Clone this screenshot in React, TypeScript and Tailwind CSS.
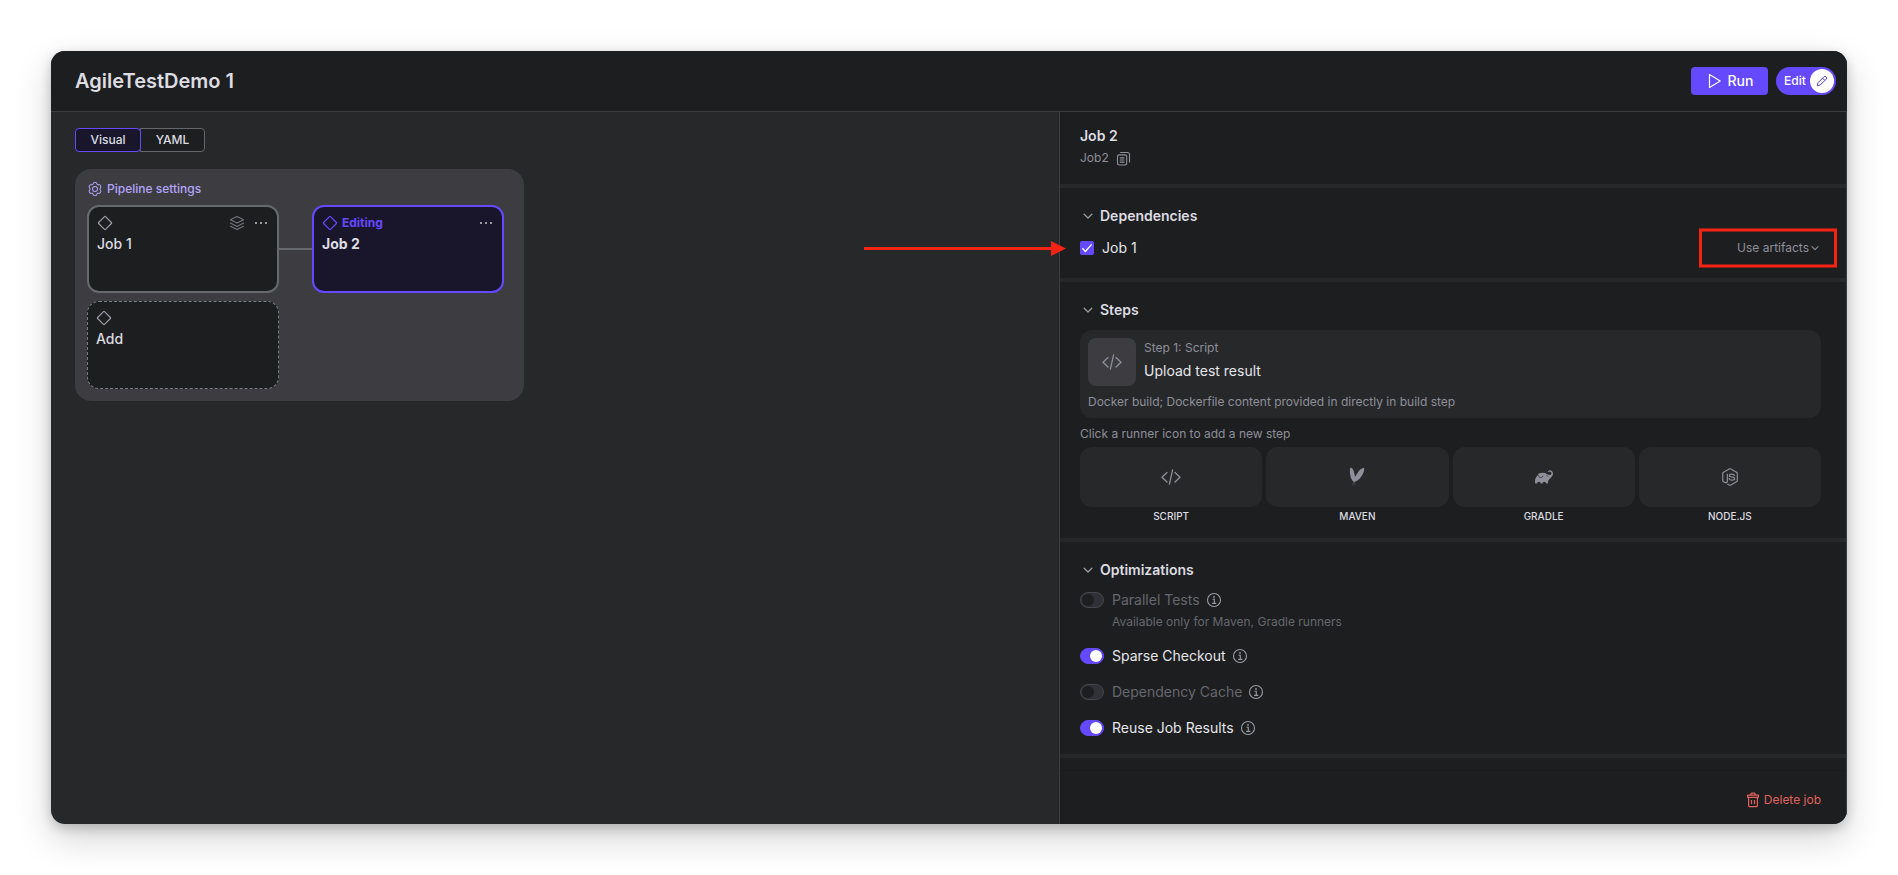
import { useState } from 'react';
import type { ReactNode } from 'react';
import { FaNodeJs } from 'react-icons/fa';
import { PiGearSix } from 'react-icons/pi';
import { SiGradle } from 'react-icons/si';

interface IconProps {
  className?: string;
}

function DiamondIcon({ className }: IconProps) {
  return (
    <svg className={className} viewBox="0 0 16 16" fill="none" stroke="currentColor" strokeWidth="1.2" strokeLinejoin="round">
      <path d="M7.5 1.6a.7.7 0 0 1 1 0l5.9 5.9a.7.7 0 0 1 0 1l-5.9 5.9a.7.7 0 0 1-1 0L1.6 8.5a.7.7 0 0 1 0-1z" />
    </svg>
  );
}

function LayersIcon({ className }: IconProps) {
  return (
    <svg className={className} viewBox="0 0 16 16" fill="none" stroke="currentColor" strokeWidth="1.1" strokeLinejoin="round" strokeLinecap="round">
      <path d="M8 1.5 14.6 4.8 8 8.1 1.4 4.8z" />
      <path d="M1.4 8 8 11.4 14.6 8M1.4 11.2 8 14.6l6.6-3.4" />
    </svg>
  );
}

function DotsIcon({ className }: IconProps) {
  return (
    <svg className={className} viewBox="0 0 16 16" fill="currentColor">
      <path d="M2 7h2v2H2zM7 7h2v2H7zM12 7h2v2h-2z" />
    </svg>
  );
}

function ChevronIcon({ className }: IconProps) {
  return (
    <svg className={className} viewBox="0 0 10 10" fill="none" stroke="currentColor" strokeWidth="1.3" strokeLinecap="round" strokeLinejoin="round">
      <path d="M1.2 3.2 5 7l3.8-3.8" />
    </svg>
  );
}

function CopyIcon({ className }: IconProps) {
  return (
    <svg className={className} viewBox="0 0 16 16" fill="none" stroke="currentColor" strokeWidth="1.2" strokeLinecap="round">
      <rect x="1.6" y="4.1" width="9.8" height="10.8" rx="1.8" />
      <path d="M5 1.6h7.4a2 2 0 0 1 2 2v8M4.5 7.3h4M4.5 9.6h4M4.5 11.9h4" />
    </svg>
  );
}

function CodeIcon({ className }: IconProps) {
  return (
    <svg className={className} viewBox="0 0 20 16" fill="none" stroke="currentColor" strokeWidth="1.3" strokeLinecap="round" strokeLinejoin="round">
      <path d="M6 3.5 1 8.2 6 13M14 3.5l5 4.7-5 4.8M11.6.8 8.4 15.2" />
    </svg>
  );
}

function MavenIcon({ className }: IconProps) {
  return (
    <svg className={className} viewBox="0 0 16 20" fill="currentColor">
      <path d="M1.5.6c1.8.4 3 2.2 3.6 4.8l1 4.3L9.2 5c1.6-2.3 3.8-4.1 6-4.2.3 2.7-.9 6.3-3.2 9.2-1.9 2.4-4.2 4.3-6.9 5C3 14 1.3 9.9 1 6.200.8 4 .9 1.9 1.5.6z" />
      <path d="m4.8 14.5-1.3 4M5.2 14.5l1 4" stroke="currentColor" strokeWidth=".6" opacity=".5" />
    </svg>
  );
}

function InfoIcon({ className }: IconProps) {
  return (
    <svg className={className} viewBox="0 0 16 16" fill="none" stroke="currentColor" strokeWidth="1.1">
      <circle cx="8" cy="8" r="6.5" />
      <path d="M6.5 7.2h1.8v4.2M6.1 11.4h4.2" />
      <circle cx="8" cy="4.9" r=".4" />
    </svg>
  );
}

function TrashIcon({ className }: IconProps) {
  return (
    <svg className={className} viewBox="0 0 14 16" fill="none" stroke="currentColor" strokeWidth="1.2" strokeLinejoin="round">
      <path d="M1.6 3.1h10.8v2.2H1.6zM4.4 3.1l1-1.9h3.2l1 1.9M2.6 5.3v8a1.3 1.3 0 0 0 1.3 1.3h6.2a1.3 1.3 0 0 0 1.3-1.3v-8M5.5 8v4M8.5 8v4" />
    </svg>
  );
}

const optimizations = [
  { id: 'parallel', label: 'Parallel Tests', on: false, disabled: true, hint: 'Available only for Maven, Gradle runners' },
  { id: 'sparse', label: 'Sparse Checkout', on: true, disabled: false },
  { id: 'cache', label: 'Dependency Cache', on: false, disabled: true },
  { id: 'reuse', label: 'Reuse Job Results', on: true, disabled: false },
];

const runners = [
  { name: 'SCRIPT', icon: <CodeIcon className="h-4 w-5" /> },
  { name: 'MAVEN', icon: <MavenIcon className="h-5 w-4" /> },
  { name: 'GRADLE', icon: <SiGradle className="size-[18px]" /> },
  { name: 'NODE.JS', icon: <FaNodeJs className="size-[18px]" /> },
];

function Section({ title, children }: { title: string; children: ReactNode }) {
  const [open, setOpen] = useState(true);

  return (
    <section className="border-b-4 border-[#27282a] pl-5 pr-[25px] pt-4">
      <h2>
        <button
          onClick={() => setOpen(!open)}
          className="flex h-6 items-center gap-[7px] pl-[3px] text-sm font-semibold text-[#dcdce1]"
        >
          <ChevronIcon className="size-[10px] text-[#9a9aa3]" />
          {title}
        </button>
      </h2>
      {open && children}
    </section>
  );
}

function Header() {
  return (
    <header className="flex h-[61px] shrink-0 items-center justify-between border-b border-[#3c3c41] bg-[#1d1e20] pl-6 pr-[11px]">
      <h1 className="text-xl font-semibold text-[#dcdce1]">AgileTestDemo 1</h1>
      <div className="flex items-center gap-2">
        <button className="flex h-7 w-[77px] items-center justify-center gap-1.5 rounded bg-[#6549ff] text-sm font-medium text-white">
          <svg className="size-4" viewBox="0 0 16 16" fill="none" stroke="currentColor" strokeWidth="1.2" strokeLinejoin="round">
            <path d="M3.5 1.6v12.8L14.2 8z" />
          </svg>
          Run
        </button>
        <button className="flex h-7 w-[60px] items-center justify-between rounded-full bg-[#6549ff] pl-2 pr-0.5 text-xs font-medium text-white">
          Edit
          <span className="flex size-6 items-center justify-center rounded-full bg-white text-[#5a44c8]">
            <svg className="size-3" viewBox="0 0 12 12" fill="none" stroke="currentColor" strokeLinejoin="round">
              <path d="M1.3 10.7 2 7.7l5.9-5.9a1.4 1.4 0 0 1 2.1 0l.2.2a1.4 1.4 0 0 1 0 2.1L4.3 10zM6.6 3.1l2.3 2.3" />
            </svg>
          </span>
        </button>
      </div>
    </header>
  );
}

function PipelineCanvas() {
  return (
    <main className="flex-1 px-6 pt-4">
      <div className="flex text-xs font-medium text-[#dcdce1]">
        <button className="z-10 h-6 w-[66px] rounded border border-[#6549ff] bg-[#19162c]">Visual</button>
        <button className="-ml-px h-6 w-[65px] rounded-r border border-[#66676e] bg-[#1d1e20]">YAML</button>
      </div>

      <div className="mt-[17px] w-[449px] rounded-2xl bg-[#3c3c41] px-3 pb-3 pt-2.5">
        <button className="flex h-5 items-center gap-1 text-xs font-medium text-[#b3a4fb]">
          <PiGearSix className="size-4 rotate-90" />
          Pipeline settings
        </button>

        <div className="mt-1.5 flex items-center">
          <div className="h-[88px] w-48 rounded-xl border-2 border-[#66696e] bg-[#1d1e20] px-2 pt-2">
            <div className="flex h-4 items-center text-[#9a9aa3]">
              <DiamondIcon className="size-4" />
              <LayersIcon className="ml-auto size-4 text-[#74757c]" />
              <button aria-label="Job 1 actions" className="ml-2">
                <DotsIcon className="size-4" />
              </button>
            </div>
            <p className="mt-px text-sm font-medium leading-6 text-[#dcdce1]">Job 1</p>
          </div>
          <div className="h-0.5 w-[33px] bg-[#66696e]" />
          <div className="h-[88px] w-48 rounded-xl border-2 border-[#6549ff] bg-[#19162c] px-2 pt-2">
            <div className="flex h-4 items-center gap-1 text-xs font-bold text-[#6549ff]">
              <DiamondIcon className="size-4" />
              Editing
              <button aria-label="Job 2 actions" className="ml-auto text-[#9a9aa3]">
                <DotsIcon className="size-4" />
              </button>
            </div>
            <p className="mt-px text-sm font-bold leading-6 text-[#dcdce1]">Job 2</p>
          </div>
        </div>

        <button className="mt-2 flex h-[88px] w-48 flex-col items-start rounded-xl border border-dashed border-[#7c7d84] bg-[#1d1e20] px-2 pt-2 text-sm font-medium text-[#dcdce1]">
          <DiamondIcon className="size-4 text-[#9a9aa3]" />
          <span className="mt-px leading-6">Add</span>
        </button>
      </div>
    </main>
  );
}

function JobPanel() {
  return (
    <aside className="flex w-[788px] shrink-0 flex-col border-x border-[#3c3c41] bg-[#1d1e20]">
      <div className="border-b-4 border-[#27282a] px-5 pb-4 pt-3">
        <h2 className="text-sm font-semibold leading-6 text-[#dcdce1]">Job 2</h2>
        <div className="flex h-5 items-center gap-[7px] text-xs text-[#8e8f9a]">
          Job2
          <button aria-label="Copy job ID">
            <CopyIcon className="size-[15px]" />
          </button>
        </div>
      </div>

      <Section title="Dependencies">
        <div className="relative mb-[18px] mt-2 flex h-6 items-center justify-between">
          <label className="flex items-center gap-2 text-sm text-[#e6e6ea]">
            <span className="relative size-[14px]">
              <input type="checkbox" defaultChecked className="peer block size-[14px] appearance-none rounded-xs bg-[#45464d] checked:bg-[#6549ff]" />
              <svg className="pointer-events-none absolute inset-0 hidden size-[14px] peer-checked:block" viewBox="0 0 14 14" fill="none" stroke="white" strokeWidth="1.4">
                <path d="m2.4 7.2 3 3.2 6.2-7" />
              </svg>
            </span>
            Job 1
          </label>
          <div className="relative flex items-center gap-0.5 pr-0.5 text-[#8e8f9a]">
            <select aria-label="Job 1 dependency" className="appearance-none text-right text-xs">
              <option>Use artifacts</option>
            </select>
            <ChevronIcon className="size-2" />
            <div className="pointer-events-none absolute -right-4 top-1/2 h-[39px] w-[138px] -translate-y-1/2 border-3 border-[#f52314]" />
          </div>
          <svg className="absolute right-full mr-[14px] h-[15px] w-[202px] text-[#f52314]" viewBox="0 0 202 15" fill="currentColor">
            <path d="M0 6h187V0l15 7.5-15 7.5V9H0z" />
          </svg>
        </div>
      </Section>

      <Section title="Steps">
        <button className="mt-2 block w-full rounded-xl bg-[#27282a] px-2 pb-1.5 pt-2 text-left text-xs text-[#8e8f9a]">
          <span className="flex gap-2">
            <span className="flex size-12 items-center justify-center rounded-lg bg-[#3c3c41]">
              <CodeIcon className="h-4 w-5" />
            </span>
            <span>
              <span className="block leading-5">Step 1: Script</span>
              <span className="mt-px block text-sm leading-6 text-[#e6e6ea]">Upload test result</span>
            </span>
          </span>
          <span className="mt-1.5 block leading-5">Docker build; Dockerfile content provided in directly in build step</span>
        </button>
        <p className="mt-1.5 text-xs leading-5 text-[#8e8f9a]">Click a runner icon to add a new step</p>
        <div className="mb-[14px] mt-[3px] grid grid-cols-4 gap-1">
          {runners.map((runner) => (
            <button key={runner.name} className="text-[10px] font-medium leading-4 text-[#dcdce1]">
              <span className="mb-px flex h-[60px] items-center justify-center rounded-xl bg-[#27282a] text-[#8e8f9a]">
                {runner.icon}
              </span>
              {runner.name}
            </button>
          ))}
        </div>
      </Section>

      <Section title="Optimizations">
        <ul className="mb-4 mt-2 flex flex-col gap-4">
          {optimizations.map((item) => (
            <li key={item.id} className="text-[#e6e6ea] has-disabled:text-[#66676e]">
              <div className="flex h-5 items-center">
                <input
                  id={item.id}
                  type="checkbox"
                  role="switch"
                  defaultChecked={item.on}
                  disabled={item.disabled}
                  className="flex h-4 w-6 appearance-none items-center rounded-full border border-[#45464b] bg-[#303136] before:ml-px before:size-3 before:rounded-full before:bg-[#1d1e20] checked:justify-end checked:border-[#6549ff] checked:bg-[#6549ff] checked:before:mr-px checked:before:bg-white"
                />
                <label htmlFor={item.id} className="ml-2 mr-1.5 text-sm">{item.label}</label>
                <InfoIcon className="size-4 text-[#9a9aa3]" />
              </div>
              {item.hint && <p className="-mb-0.5 mt-0.5 pl-8 text-xs leading-5">{item.hint}</p>}
            </li>
          ))}
        </ul>
      </Section>

      <footer className="mt-3 flex flex-1 items-center justify-end border-t border-[#1a1b1d] py-4 pl-5 pr-[25px]">
        <button className="mt-1 flex items-center gap-1 text-xs text-[#e0625f]">
          <TrashIcon className="h-4 w-[14px]" />
          Delete job
        </button>
      </footer>
    </aside>
  );
}

export default function App() {
  return (
    <div className="flex min-h-screen flex-col bg-white p-[51px] font-['Inter',sans-serif]">
      <div className="flex flex-1 flex-col overflow-hidden rounded-[14px] bg-[#27282a] shadow-[0_4px_12px_rgba(0,0,0,0.2),0_14px_36px_rgba(0,0,0,0.18)]">
        <Header />
        <div className="flex flex-1">
          <PipelineCanvas />
          <JobPanel />
        </div>
      </div>
    </div>
  );
}
